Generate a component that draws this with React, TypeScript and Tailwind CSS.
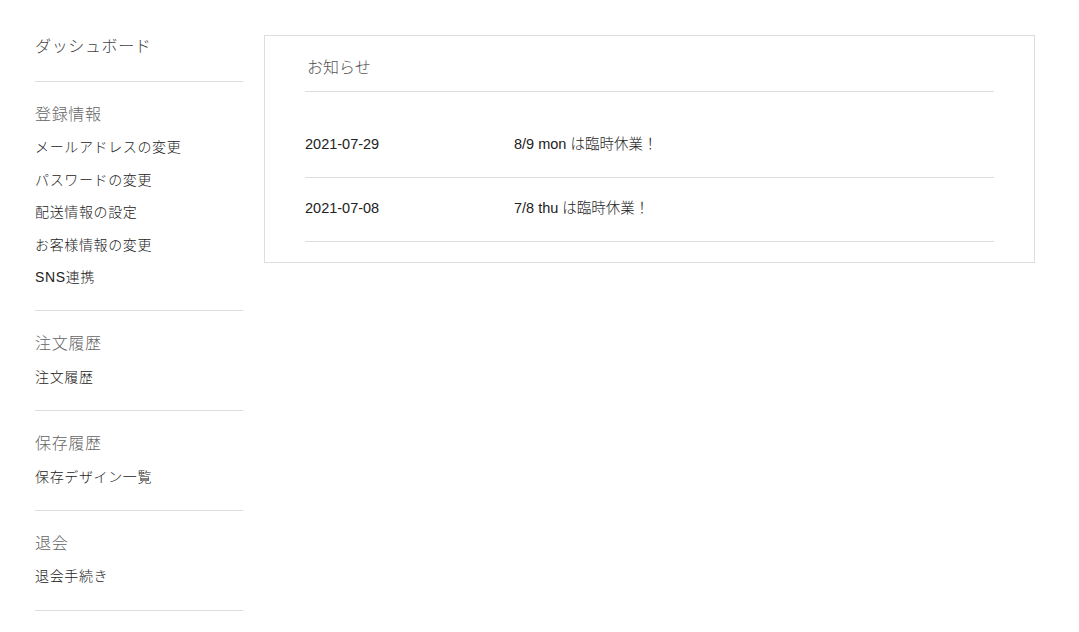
import React from "react";

const FONT = "font-['Liberation_Sans','Noto_Sans_CJK_JP',sans-serif]";

const SECTIONS = [
  { title: "登録情報", items: ["メールアドレスの変更", "パスワードの変更", "配送情報の設定", "お客様情報の変更", "SNS連携"] },
  { title: "注文履歴", items: ["注文履歴"] },
  { title: "保存履歴", items: ["保存デザイン一覧"] },
  { title: "退会", items: ["退会手続き"] },
];

const NEWS = [
  { date: "2021-07-29", text: "8/9 mon は臨時休業！" },
  { date: "2021-07-08", text: "7/8 thu は臨時休業！" },
];

function Sidebar() {
  return (
    <aside className="w-[208px] shrink-0">
      <div className="border-b border-[#dddddd] pb-[22px]">
        <a className="block text-[16px] leading-[24px] tracking-[0.04em] text-[#444444] font-light">ダッシュボード</a>
      </div>
      {SECTIONS.map(sec => (
        <div key={sec.title} className="border-b border-[#dddddd] py-[17px]">
          <h3 className="text-[16px] leading-[32.4px] tracking-[0.04em] text-[#666666] font-light">{sec.title}</h3>
          <ul>
            {sec.items.map(item => (
              <li key={item} className="text-[14px] leading-[32.4px] tracking-[0.045em] text-[#222222] font-light">
                {item}
              </li>
            ))}
          </ul>
        </div>
      ))}
    </aside>
  );
}

function News() {
  return (
    <section className="w-[771px] border border-[#dddddd] px-[40px] pt-[20px] pb-[20px]">
      <h2 className="pl-[2px] pb-[11px] text-[16px] leading-[24px] text-[#555555] font-light border-b border-[#dddddd]">
        お知らせ
      </h2>
      <ul className="mt-[22px]">
        {NEWS.map(n => (
          <li key={n.date} className="flex items-center pt-[20px] pb-[23px] border-b border-[#dddddd] text-[14.5px] leading-[20px] text-[#222222] font-light">
            <span className="w-[209px] shrink-0">{n.date}</span>
            <span>{n.text}</span>
          </li>
        ))}
      </ul>
    </section>
  );
}

export default function App() {
  return (
    <div className={`${FONT} min-h-[632px] bg-white flex items-start gap-[21px] pl-[35px] pt-[35px]`}>
      <Sidebar />
      <News />
    </div>
  );
}
